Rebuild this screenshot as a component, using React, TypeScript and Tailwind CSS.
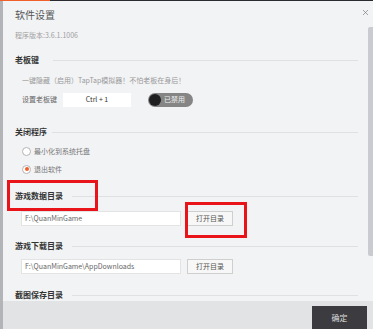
import { X } from 'lucide-react'

const font = { fontFamily: '"Noto Sans CJK SC", "Noto Sans", sans-serif' }

function Heading({ label, gap, className }: { label: string; gap: string; className: string }) {
  return (
    <div className={`flex items-center h-[12px] mr-[10px] ${className}`}>
      <span className="text-[8px] font-bold text-[#333] leading-none whitespace-nowrap">{label}</span>
      <div className={`flex-1 h-px bg-[#dfe0e3] ${gap}`} />
    </div>
  )
}

function Radio({ label, checked, className }: { label: string; checked?: boolean; className: string }) {
  return (
    <div className={`flex items-center h-[12px] ml-[7px] gap-[3px] ${className}`}>
      <div className="w-[9px] h-[9px] rounded-full border border-[#b5b5b5] bg-white flex items-center justify-center">
        {checked && <div className="w-[4px] h-[4px] rounded-full bg-[#f0602a]" />}
      </div>
      <span className="text-[7px] text-[#777] leading-none">{label}</span>
    </div>
  )
}

function DirRow({ path, className }: { path: string; className: string }) {
  return (
    <div className={`flex items-center h-[15px] ml-[6px] gap-[6px] ${className}`}>
      <div className="w-[160px] h-[15px] bg-white border border-[#e3e3e3] flex items-center pl-[3px] text-[7px] text-[#666] leading-none">
        {path}
      </div>
      <div className="w-[46px] h-[15px] bg-[#f7f7f7] border border-[#cfcfcf] flex items-center justify-center text-[7px] text-[#555] leading-none">
        打开目录
      </div>
    </div>
  )
}

export default function App() {
  return (
    <div className="relative w-[373px] h-[329px] overflow-hidden bg-[#f2f3f5] flex flex-col" style={font}>
      <div className="h-[2px] flex bg-[#2a2b31]">
        <div className="w-[50px] bg-[#f0602a]" />
      </div>
      <div className="flex-1 flex">
        <div className="w-[3px] bg-[#b3b4b7]" />
        <div className="flex-1 flex flex-col">
          <div className="h-[300px] flex overflow-hidden">
            <div className="flex-1 flex flex-col pl-[12px]">
              <div className="h-[28px] flex items-center justify-between">
                <span className="text-[10px] text-[#555] leading-none">软件设置</span>
                <X className="w-[9px] h-[9px] text-[#777] -mr-[2px] -mt-[6px]" strokeWidth={1.75} />
              </div>
              <div className="h-[12px] flex items-center text-[7px] text-[#a0a0a0] leading-none">程序版本:3.6.1.1006</div>

              <Heading label="老板键" gap="ml-[14px]" className="mt-[13px]" />
              <div className="h-[12px] mt-[8px] ml-[7px] flex items-center text-[7px] text-[#999] leading-none whitespace-nowrap">
                一键隐藏（启用）TapTap模拟器！不怕老板在身后！
              </div>
              <div className="h-[15px] mt-[6px] ml-[7px] flex items-center">
                <span className="text-[7px] text-[#666] leading-none w-[41px]">设置老板键</span>
                <div className="w-[68px] h-[14px] bg-white flex items-center justify-center text-[7px] text-[#333] leading-none">
                  Ctrl + 1
                </div>
                <div className="ml-[17px] w-[45px] h-[14px] rounded-full bg-[#858585] flex items-center p-[1px]">
                  <div className="w-[12px] h-[12px] rounded-full bg-[#1f1f22]" />
                  <span className="ml-[3px] text-[7px] text-[#eee] leading-none">已禁用</span>
                </div>
              </div>

              <Heading label="关闭程序" gap="ml-[5px]" className="mt-[19px]" />
              <Radio label="最小化到系统托盘" className="mt-[7px]" />
              <Radio label="退出软件" checked className="mt-[6px]" />

              <Heading label="游戏数据目录" gap="ml-[9px]" className="mt-[15px]" />
              <DirRow path="F:\QuanMinGame" className="mt-[9px]" />

              <Heading label="游戏下载目录" gap="ml-[9px]" className="mt-[14px]" />
              <DirRow path="F:\QuanMinGame\AppDownloads" className="mt-[7px]" />

              <Heading label="截图保存目录" gap="ml-[9px]" className="mt-[15px]" />
            </div>
            <div className="w-[5px] pt-[26px]">
              <div className="h-[229px] bg-[#c9cbd0] rounded-l-[2px]" />
            </div>
          </div>
          <div className="flex-1 bg-[#e2e3e5] flex justify-end items-start pt-[5px] pr-[6px]">
            <div className="w-[55px] h-[23px] bg-[#3b3b40] flex items-center justify-center text-[8px] text-[#ddd] leading-none">
              确定
            </div>
          </div>
        </div>
      </div>

      <div className="absolute left-[7px] top-[180px] w-[91px] h-[31px] border-[3px] border-[#e8141a]" />
      <div className="absolute left-[185px] top-[202px] w-[62px] h-[36px] border-[3px] border-[#e8141a]" />
    </div>
  )
}
